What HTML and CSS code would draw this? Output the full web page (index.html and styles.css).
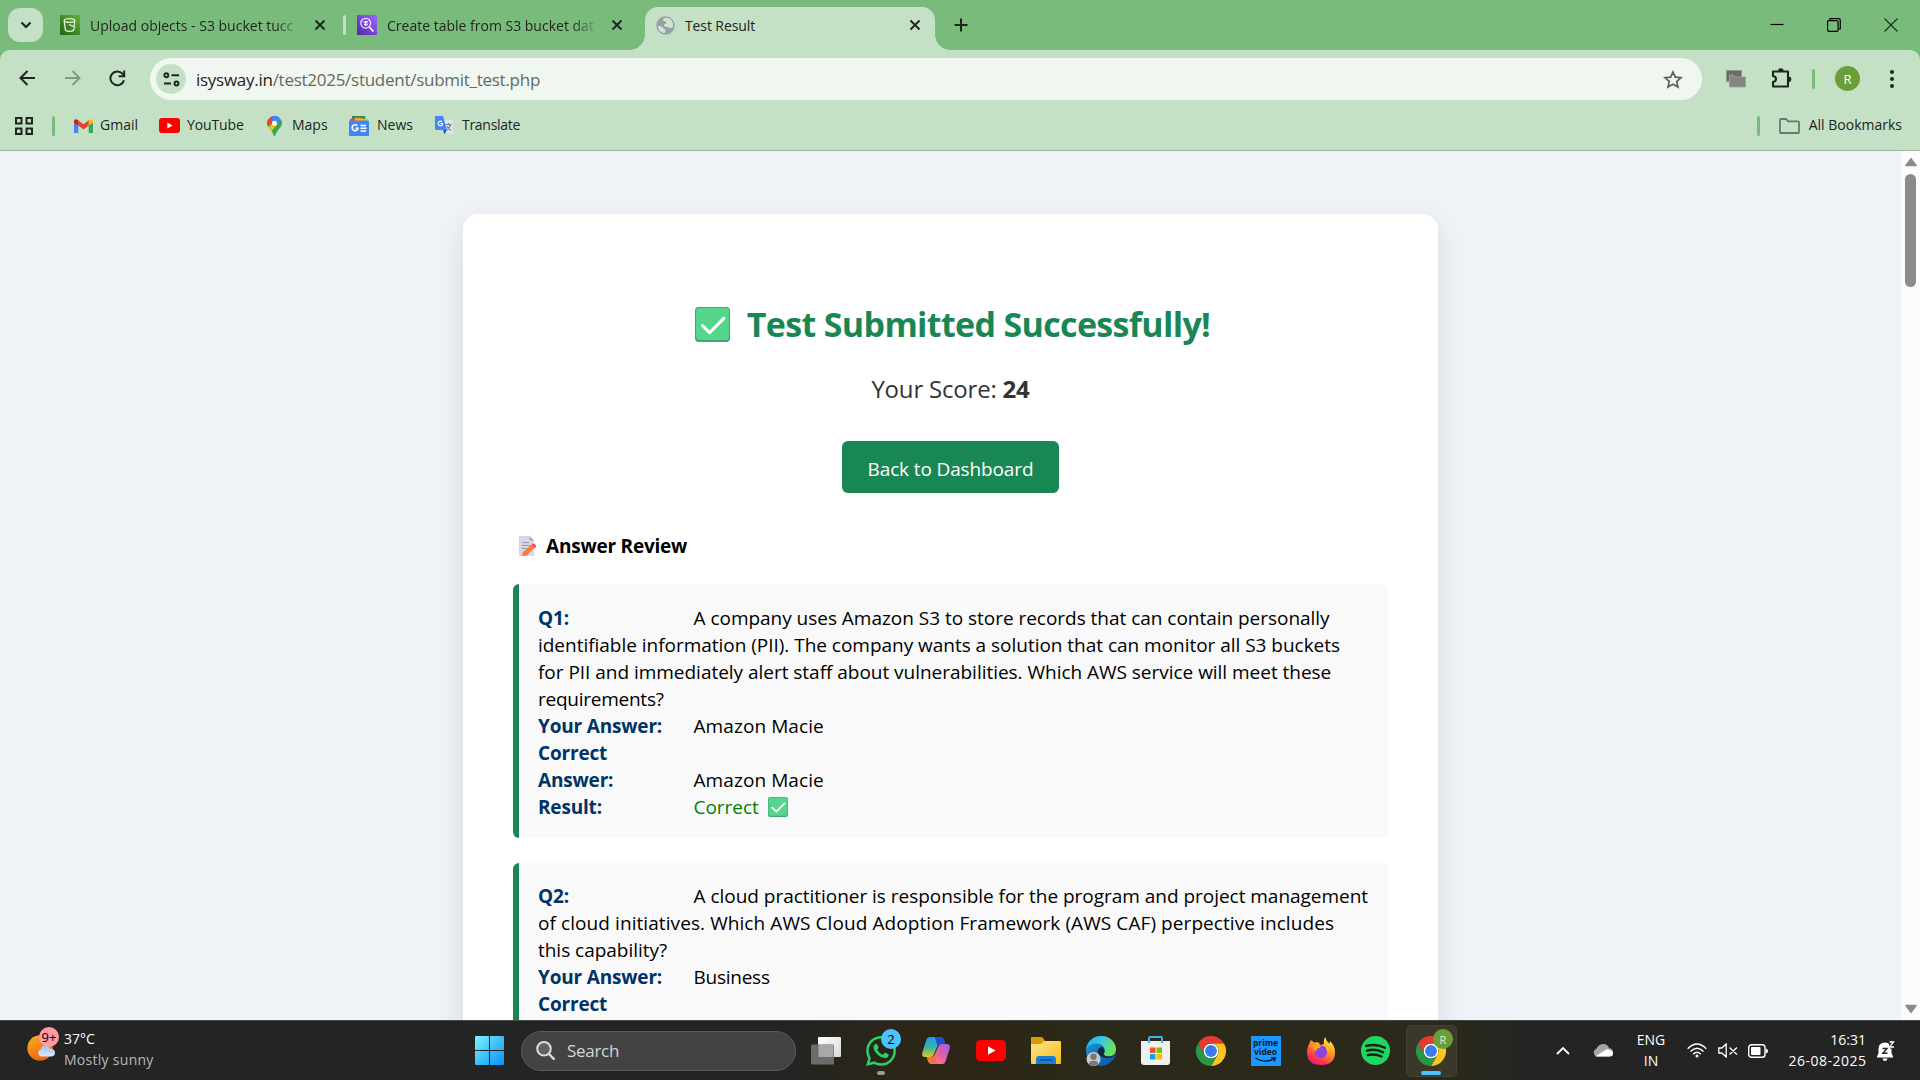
FILE: index.html
```html
<!DOCTYPE html>
<html lang="en">
<head>
<meta charset="utf-8">
<title>Test Result</title>
<link rel="stylesheet" href="styles.css">
</head>
<body>
<svg class="defs" width="0" height="0" aria-hidden="true">
  <defs>
    <linearGradient id="gBucket" x1="0" y1="1" x2="1" y2="0"><stop offset="0" stop-color="#1b660f"/><stop offset="1" stop-color="#6cae3e"/></linearGradient>
    <linearGradient id="gAthena" x1="0" y1="1" x2="1" y2="0"><stop offset="0" stop-color="#4d27a8"/><stop offset="1" stop-color="#a166ff"/></linearGradient>
    <linearGradient id="gWin" x1="0" y1="0" x2="1" y2="1"><stop offset="0" stop-color="#7df5ff"/><stop offset=".5" stop-color="#3fc0fb"/><stop offset="1" stop-color="#0a92fa"/></linearGradient>
    <linearGradient id="gSun" x1="0" y1="0" x2=".4" y2="1"><stop offset="0" stop-color="#f5b325"/><stop offset="1" stop-color="#f0670b"/></linearGradient>
    <linearGradient id="gCloud" x1="0" y1="0" x2="0" y2="1"><stop offset="0" stop-color="#9dbdf0"/><stop offset="1" stop-color="#d9e7fc"/></linearGradient>
    <linearGradient id="gFolder" x1="0" y1="0" x2="1" y2="1"><stop offset="0" stop-color="#ffe28a"/><stop offset="1" stop-color="#f6bd1d"/></linearGradient>
    <linearGradient id="gCopA" x1="0" y1="0" x2="0" y2="1"><stop offset="0" stop-color="#2399f0"/><stop offset=".55" stop-color="#3cb8a0"/><stop offset="1" stop-color="#e9c60c"/></linearGradient>
    <linearGradient id="gCopB" x1="1" y1="0" x2="0" y2="1"><stop offset="0" stop-color="#9b5cf0"/><stop offset=".5" stop-color="#e9609f"/><stop offset="1" stop-color="#ffa05c"/></linearGradient>
    <linearGradient id="gEdgeTop" x1="0" y1="0" x2="1" y2=".4"><stop offset="0" stop-color="#2aa9ea"/><stop offset=".5" stop-color="#36c7e0"/><stop offset="1" stop-color="#6be358"/></linearGradient>
    <linearGradient id="gEdgeLow" x1="0" y1="0" x2="1" y2="1"><stop offset="0" stop-color="#1b9de2"/><stop offset="1" stop-color="#0b4f9e"/></linearGradient>
    <linearGradient id="gFox" x1=".8" y1="0" x2=".2" y2="1"><stop offset="0" stop-color="#fff04a"/><stop offset=".4" stop-color="#ff9a22"/><stop offset=".75" stop-color="#ff3a4a"/><stop offset="1" stop-color="#e3158a"/></linearGradient>
    <linearGradient id="gView" x1="0" y1="0" x2="1" y2="1"><stop offset="0" stop-color="#fff"/><stop offset="1" stop-color="#d8d8d8"/></linearGradient>
    <symbol id="check" viewBox="0 0 34 34">
      <rect width="34" height="34" rx="3.6" fill="#3fa872"/><rect x="1" y="1" width="32" height="31" rx="3" fill="#56d58c"/>
      <path d="M7.2 18l7 7L28 11" fill="none" stroke="#fff" stroke-width="3" stroke-linecap="round" stroke-linejoin="round"/>
    </symbol>
    <symbol id="chrome" viewBox="0 0 48 48">
      <circle cx="24" cy="24" r="12" fill="#fff"/>
      <path fill="#e33b2e" d="M24 12H44.78a23.99 23.99 0 0 0-41.56 0L13.61 30A11.99 11.99 0 0 1 24 12Z"/>
      <path fill="#fcc31e" d="M34.39 30L24 48A23.99 23.99 0 0 0 44.78 12H24A11.99 11.99 0 0 1 34.39 30Z"/>
      <path fill="#269847" d="M13.61 30L3.22 12A23.99 23.99 0 0 0 24 48L34.39 30a11.99 11.99 0 0 1-20.78 0Z"/>
      <circle cx="24" cy="24" r="9.5" fill="#3a7cec"/>
    </symbol>
    <symbol id="close" viewBox="0 0 12 12"><path d="M1.5 1.5l9 9M10.5 1.5l-9 9" stroke="#1f2421" stroke-width="1.9" fill="none"/></symbol>
    <symbol id="tube" viewBox="0 0 30 22"><rect width="30" height="22" rx="4.5" fill="#f00"/><path d="M12 6.5v9l7.5-4.5z" fill="#fff"/></symbol>
  </defs>
</svg>

<div class="screen">
  <header class="browser">
    <div class="tabstrip">
      <div class="tab-search"><svg width="12" height="8" viewBox="0 0 12 8"><path d="M1.5 1.5L6 6l4.5-4.5" fill="none" stroke="#1f2421" stroke-width="2.2"/></svg></div>
      <div class="tab tab-one">
        <svg width="20" height="20" viewBox="0 0 20 20"><rect width="20" height="20" fill="url(#gBucket)"/><g fill="none" stroke="#e6f3dc" stroke-width="1.3"><ellipse cx="9.5" cy="5.5" rx="5.3" ry="1.8"/><path d="M4.2 6l1.2 9.2c1.8 1.5 6.4 1.5 8.2 0L14.800 6M9 9.500l6.500 3"/></g></svg>
        <span class="tab-title">Upload objects - S3 bucket tucc</span>
        <svg width="12" height="12"><use href="#close"/></svg>
      </div>
      <i class="tab-rule"></i>
      <div class="tab">
        <svg width="20" height="20" viewBox="0 0 20 20"><rect width="20" height="20" fill="url(#gAthena)"/><g fill="none" stroke="#f0e6ff" stroke-width="1.3"><circle cx="8.7" cy="8.2" r="4.9"/><path d="M12.3 11.8l4.2 4.8" stroke-width="2"/><path d="M6.5 7h4.4M6.8 9.5h4M8.7 6v5"/></g></svg>
        <span class="tab-title">Create table from S3 bucket dat</span>
        <svg width="12" height="12"><use href="#close"/></svg>
      </div>
      <div class="tab-active">
        <svg width="19" height="19" viewBox="0 0 20 20"><circle cx="10" cy="10" r="9.7" fill="#9aa0a6"/><path d="M2.2 10.5c1.9-.4 4.3.4 5.2 2 .8 1.500 2.400.700 2.600 2.300.1 1.100-1 1.900-.6 3.200-4-.1-7.300-3.300-7.200-7.500zM9.200 2c-1.700.6-2.200 1.900-1.200 2.900 1.200 1 2.900.2 3 1.900-.1 1.700-2.600 1.300-2.700 2.900 0 1.400 1.500 1.500 2.900 1.500 1.700 0 2 1.500 3.600 1.500 1.200 0 2.300-.3 3-1.100.8-3-.4-6.800-3.500-8.600-1.500-.9-3.500-1.300-5.100-1z" fill="#d0e6d2"/></svg>
        <span class="tab-title">Test Result</span>
        <svg width="12" height="12"><use href="#close"/></svg>
      </div>
      <svg class="new-tab" width="14" height="14" viewBox="0 0 14 14"><path d="M7 .5v13M.5 7h13" stroke="#1f2421" stroke-width="2"/></svg>
      <div class="window-controls">
        <svg width="14" height="14" viewBox="0 0 14 14"><path d="M.5 6.500h13" stroke="#000" stroke-width="1.2"/></svg>
        <svg width="14" height="14" viewBox="0 0 14 14" fill="none" stroke="#000" stroke-width="1.2"><rect x=".6" y="2.600" width="10.500" height="10.800" rx="1.300"/><path d="M3 2.500V.6h8.500q1.800 0 1.800 1.800V11h-1.800"/></svg>
        <svg width="14" height="14" viewBox="0 0 14 14"><path d="M.5.5l13 13M13.500.5l-13 13" stroke="#1d2b1e" stroke-width="1.100"/></svg>
      </div>
    </div>

    <div class="toolbar">
      <div class="nav">
        <svg width="17" height="16" viewBox="0 0 17 16"><path d="M16 8H2M8.500 1L1.500 8l7 7" fill="none" stroke="#1f2421" stroke-width="2"/></svg>
        <svg width="17" height="16" viewBox="0 0 17 16"><path d="M1 8h14M8.500 1l7 7-7 7" fill="none" stroke="#7f9a83" stroke-width="2"/></svg>
        <svg width="17" height="17" viewBox="0 0 17 17"><path d="M15 10.200A6.900 6.900 0 1 1 13.500 3.700L15 5.500" fill="none" stroke="#1f2421" stroke-width="2"/><path d="M15.200.5V6.200H9.700" fill="none" stroke="#1f2421" stroke-width="2"/></svg>
      </div>
      <div class="omnibox">
        <span class="site-info"><svg width="17" height="15" viewBox="0 0 17 15" fill="none" stroke="#1f2421" stroke-width="1.900"><circle cx="3.300" cy="3.200" r="2"/><path d="M8.500 3.200H16M1 11.500h7"/><circle cx="13.500" cy="11.500" r="2"/></svg></span>
        <span class="url"><b>isysway.in</b>/test2025/student/submit_test.php</span>
        <svg class="star" width="20" height="19" viewBox="0 0 20 19"><path d="M10 2l2.300 5.200 5.700.5-4.300 3.800 1.300 5.600L10 14.200 5 17.100l1.300-5.600L2 7.700l5.700-.5z" fill="none" stroke="#5a625b" stroke-width="1.700"/></svg>
      </div>
      <div class="actions">
        <svg width="20" height="18" viewBox="0 0 20 18"><rect x=".5" y=".5" width="15" height="11" fill="#6b6b6b" stroke="#909690"/><path d="M3.500 5h4l1.500 2h10.500v10H3.500z" fill="#858585" stroke="#9aa29b"/></svg>
        <svg width="21" height="21" viewBox="0 0 21 21"><path d="M2 3.500H17V18.500H2V14q3-.5 3-3t-3-3Z" fill="none" stroke="#1f2421" stroke-width="2.100" stroke-linejoin="round"/><path d="M7 3a2.800 2.800 0 0 1 5.600 0zM17.500 8.500a2.800 2.800 0 0 1 0 5.600z" fill="#1f2421"/></svg>
        <i class="bar"></i>
        <span class="avatar">R</span>
        <svg width="4" height="18" viewBox="0 0 4 18" fill="#1f2421"><circle cx="2" cy="2" r="2"/><circle cx="2" cy="9" r="2"/><circle cx="2" cy="16" r="2"/></svg>
      </div>
    </div>

    <div class="bookmarks">
      <svg class="apps" width="18" height="18" viewBox="0 0 18 18" fill="none" stroke="#1f2421" stroke-width="2"><path d="M1 1h5.500v5.500H1zM11.500 1H17v5.500h-5.500zM1 11.500h5.500V17H1zM11.500 11.500H17V17h-5.500z"/></svg>
      <i class="bar"></i>
      <div class="mark m-gmail"><svg width="19" height="14" viewBox="0 0 19 14"><path d="M0 2v12h4.300V5z" fill="#4285f4"/><path d="M19 2v12h-4.300V5z" fill="#34a853"/><path d="M14.700 6.500V1.200C16.500-.5 19 .3 19 2.300V4z" fill="#fbbc04"/><path d="M4.300 6.500V1.200C2.500-.5 0 .3 0 2.300V4z" fill="#c5221f"/><path d="M4.300 1.200l5.200 4 5.200-4v5.300l-5.200 4-5.200-4z" fill="#ea4335"/></svg><span>Gmail</span></div>
      <div class="mark m-tube"><svg width="21" height="15" viewBox="0 0 30 22" preserveAspectRatio="none"><use href="#tube" width="30" height="22"/></svg><span>YouTube</span></div>
      <div class="mark m-maps"><svg width="15" height="20" viewBox="0 0 15 20"><clipPath id="pin"><path d="M7.500 0A7.300 7.300 0 0 1 14.800 7.300C14.800 12 9.500 13.500 8.200 19.500q-.7 1-1.400 0C5.500 13.500.2 12 .2 7.300A7.300 7.300 0 0 1 7.500 0Z"/></clipPath><g clip-path="url(#pin)"><path d="M0 0h15v20H0z" fill="#34a853"/><path d="M0 11.500L10 0H0z" fill="#ea4335"/><path d="M4 0h11v3L8 9z" fill="#4285f4"/><path d="M0 0l5 5-5 6z" fill="#ea4335"/><path d="M0 12L14 1l1 3L3 17z" fill="#fbbc04"/><path d="M5 4.800L9 0h6v3.500L10 9z" fill="#4285f4"/><path d="M15 3L3 17l5 3 7-5z" fill="#34a853"/></g><circle cx="7.500" cy="7.200" r="2.500" fill="#fff"/></svg><span>Maps</span></div>
      <div class="mark m-news"><svg width="20" height="20" viewBox="0 0 20 20"><path d="M3 0h13l1 6H3z" fill="#0c9d58"/><path d="M1 3l11-3 3 6H1z" fill="#ea4335"/><path d="M6 2l13 1-1 5H5z" fill="#fbbc04"/><rect y="4.500" width="20" height="15.500" rx="1" fill="#4285f4"/><path d="M8.300 9.600a3 3 0 1 0 .8 2.600H6.500M11.500 9.500H17M11.500 12.200h6M11.500 15H17" stroke="#fff" stroke-width="1.600" fill="none"/></svg><span>News</span></div>
      <div class="mark m-trans"><svg width="18" height="19" viewBox="0 0 18 19"><path d="M7 4h10q1 0 1 1v12q0 1-1 1h-7z" fill="#dfe3e8"/><path d="M10.500 8.500h6M13.500 7v1.500M15.500 8.500q-1 4-4 5.500M12 10.500q1.500 2.500 4 4" stroke="#6b7f96" stroke-width="1.200" fill="none"/><path d="M1 0h7l4 14H1q-1 0-1-1V1q0-1 1-1z" fill="#4285f4"/><path d="M8 14h4l-2.500 4.500z" fill="#2a56c6"/><path d="M7 5.700A2.300 2.300 0 1 0 7.700 7.500H5.500" stroke="#fff" stroke-width="1.200" fill="none"/></svg><span>Translate</span></div>
      <div class="all-marks"><i class="bar"></i><svg width="21" height="16" viewBox="0 0 21 16"><path d="M1 2q0-1 1-1h5l2.200 2.300H19q1 0 1 1V14q0 1-1 1H2q-1 0-1-1z" fill="none" stroke="#6d756e" stroke-width="1.800"/></svg><span>All Bookmarks</span></div>
    </div>
  </header>

  <div class="viewport">
    <main class="page">
      <section class="result">
        <h1><svg width="35" height="35"><use href="#check"/></svg><span>Test Submitted Successfully!</span></h1>
        <p class="score">Your Score: <strong>24</strong></p>
        <div class="cta"><a class="button">Back to Dashboard</a></div>
        <h2><svg width="18" height="20" viewBox="0 0 18 20"><path d="M0 0h10.500L15 4.500V20H0z" fill="#dcd4e4"/><path d="M10.500 0L15 4.500h-4.500z" fill="#aaa0b4"/><path d="M3 6.500h7M3 9.500h8M3 12.500h6" stroke="#9d94a8" stroke-width="1"/><path d="M3 20l1.200-3.800L12.500 8.500l3.200 3.200-8.300 8z" fill="#fb7a3c"/><path d="M12.500 8.500l1.300-1q1.200-.5 2.500 1t.8 2.500l-1.400.9z" fill="#f0504e"/></svg><span>Answer Review</span></h2>

        <article class="question first">
          <div class="line"><b class="label">Q1:</b><span>A company uses Amazon S3 to store records that can contain personally</span></div>
          <div class="line"><span>identifiable information (PII). The company wants a solution that can monitor all S3 buckets</span></div>
          <div class="line"><span>for PII and immediately alert staff about vulnerabilities. Which AWS service will meet these</span></div>
          <div class="line"><span class="snug">requirements?</span></div>
          <div class="line"><b class="label">Your Answer:</b><span class="loose">Amazon Macie</span></div>
          <div class="line"><b class="label">Correct</b></div>
          <div class="line"><b class="label">Answer:</b><span class="loose">Amazon Macie</span></div>
          <div class="line"><b class="label">Result:</b><span class="ok">Correct</span><svg class="tick" width="20" height="20"><use href="#check"/></svg></div>
        </article>

        <article class="question">
          <div class="line"><b class="label">Q2:</b><span>A cloud practitioner is responsible for the program and project management</span></div>
          <div class="line"><span class="loose">of cloud initiatives. Which AWS Cloud Adoption Framework (AWS CAF) perpective includes</span></div>
          <div class="line"><span>this capability?</span></div>
          <div class="line"><b class="label">Your Answer:</b><span class="snug">Business</span></div>
          <div class="line"><b class="label">Correct</b></div>
        </article>
      </section>
    </main>
    <div class="scrollbar">
      <svg width="12" height="10" viewBox="0 0 12 10"><path d="M6 .5L11.800 8.200q.2 1-.8 1H1q-1 0-.8-1z" fill="#8b8b8b"/></svg>
      <i class="thumb"></i>
      <svg class="down" width="12" height="10" viewBox="0 0 12 10"><path d="M6 9.500L11.800 1.800q.2-1-.8-1H1q-1 0-.8 1z" fill="#8b8b8b"/></svg>
    </div>
  </div>

  <footer class="taskbar">
    <div class="weather">
      <div class="sun">
        <svg width="32" height="36" viewBox="0 0 32 36"><circle cx="13" cy="21" r="12.700" fill="url(#gSun)"/><path d="M14 29.500a3.800 3.800 0 0 1 0-7.300q.5-4 4.500-4 3.500 0 4.500 3.300 5 .3 5 4.200 0 3.800-4 3.800z" fill="url(#gCloud)"/></svg>
        <span class="badge pink">9+</span>
      </div>
      <div class="forecast"><span>37°C</span><span class="sky">Mostly sunny</span></div>
    </div>
    <div class="apps-row">
      <div class="cell start"><svg width="29" height="29" viewBox="0 0 29 29"><path d="M1 0h13v14H0V1q0-1 1-1zM15 0h13q1 0 1 1v13H15zM0 15h14v14H1q-1 0-1-1zM15 15h14v13q0 1-1 1H15z" fill="url(#gWin)"/></svg></div>
      <div class="search"><svg width="19" height="19" viewBox="0 0 19 19"><circle cx="8" cy="7.800" r="6.800" fill="#626262" stroke="#dcdcdc" stroke-width="2"/><path d="M12.800 12.800l5 5" stroke="#dcdcdc" stroke-width="2.400" stroke-linecap="round"/></svg><span>Search</span></div>
      <div class="cell"><svg width="30" height="28" viewBox="0 0 30 28"><rect x="7" width="23" height="20" rx="1" fill="url(#gView)"/><rect y="7.500" width="23" height="20" rx="1" fill="#6b6b6b"/><path d="M7.500 8H22.500V20h-15z" fill="#a8a8a8"/></svg></div>
      <div class="cell"><svg width="30" height="30" viewBox="0 0 24 24"><path fill="#25d366" d="M17.472 14.382c-.297-.149-1.758-.867-2.030-.967-.273-.099-.471-.148-.670.150-.197.297-.767.966-.940 1.164-.173.199-.347.223-.644.075-.297-.150-1.255-.463-2.390-1.475-.883-.788-1.480-1.761-1.653-2.059-.173-.297-.018-.458.130-.606.134-.133.298-.347.446-.520.149-.174.198-.298.298-.497.099-.198.050-.371-.025-.520-.075-.149-.669-1.612-.916-2.207-.242-.579-.487-.500-.669-.510-.173-.008-.371-.010-.570-.010-.198 0-.520.074-.792.372-.272.297-1.040 1.016-1.040 2.479 0 1.462 1.065 2.875 1.213 3.074.149.198 2.096 3.200 5.077 4.487.709.306 1.262.489 1.694.625.712.227 1.360.195 1.871.118.571-.085 1.758-.719 2.006-1.413.248-.694.248-1.289.173-1.413-.074-.124-.272-.198-.570-.347m-5.421 7.403h-.004a9.870 9.870 0 0 1-5.031-1.378l-.361-.214-3.741.982.998-3.648-.235-.374a9.860 9.860 0 0 1-1.510-5.260c.001-5.450 4.436-9.884 9.888-9.884 2.640 0 5.122 1.030 6.988 2.898a9.825 9.825 0 0 1 2.893 6.994c-.003 5.450-4.437 9.884-9.885 9.884m8.413-18.297A11.815 11.815 0 0 0 12.050 0C5.495 0 .160 5.335.157 11.892c0 2.096.547 4.142 1.588 5.945L.057 24l6.305-1.654a11.882 11.882 0 0 0 5.683 1.448h.005c6.554 0 11.890-5.335 11.893-11.893a11.821 11.821 0 0 0-3.480-8.413z"/></svg><span class="badge blue">2</span><i class="dot"></i></div>
      <div class="cell"><svg width="28" height="27" viewBox="0 0 28 27"><path d="M8 0h10q3 0 4 3l1 4h-4q-3 0-4 3l-3 7q-1 3-4 3H3q-4 0-2.500-5L4 4Q5 0 8 0z" fill="url(#gCopA)"/><path d="M12 0h6q3 0 4 3l1 4h-4q-2.500 0-3.500 2L14 4q-.5-3-2-4z" fill="#1f4fd0"/><path d="M20 27H10q-3 0-4-3l-1-4h4q3 0 4-3l3-7q1-3 4-3h5q4 0 2.500 5L24 23q-1 4-4 4z" fill="url(#gCopB)"/><path d="M16 27h-6q-3 0-4-3l-1-4h4q2.500 0 3.500-2L14 23q.5 3 2 4z" fill="#f0714e"/></svg></div>
      <div class="cell"><svg width="30" height="21" viewBox="0 0 30 22" preserveAspectRatio="none"><use href="#tube" width="30" height="22"/></svg></div>
      <div class="cell"><svg width="30" height="27" viewBox="0 0 30 27"><path d="M0 1q0-1 1-1h9q1 0 2 1l2 3-3 4H0z" fill="#d99a08"/><path d="M0 7h9q1.500 0 2.500-1.500T14 4h15q1 0 1 1v21q0 1-1 1H1q-1 0-1-1z" fill="url(#gFolder)"/><path d="M5 27v-4.500Q5 19 8 19h14q3 0 3 3.500V27z" fill="#1a7fd4"/><path d="M8.500 23h13" stroke="#0b5299" stroke-width="1.400"/></svg></div>
      <div class="cell"><svg width="30" height="30" viewBox="0 0 30 30"><circle cx="15" cy="15" r="15" fill="url(#gEdgeLow)"/><path d="M0 14C1 5 7.500 0 15 0c9 0 15 6.500 15 13 0 5-4 7.500-8 7.500-3.500 0-5-1.300-4-2.700C20 14 18 7.500 10.500 7.500 5 7.500 1.500 10.500 0 14z" fill="url(#gEdgeTop)"/><path d="M11.500 15.500q1-4.500 4.500-4.500 3 1.500 2.500 4.500-.5 1.500-1 2.700 1.500 2.300 5.500 2.300 3.500-.3 5.500-1.500Q27 22 22 22 12.500 22 11.500 15.500z" fill="#15283a"/><circle cx="7.500" cy="23" r="7" fill="#c9c9c9"/><circle cx="7.500" cy="20.800" r="3.200" fill="#7c7672"/><path d="M3 28q0-3.200 4.500-3.200T12 28q-4.500 3.500-9 0z" fill="#7c7672"/></svg></div>
      <div class="cell"><svg width="29" height="29" viewBox="0 0 29 29"><path d="M8 7V2q0-1 1-1h11q1 0 1 1v5" fill="none" stroke="#35b6ea" stroke-width="2"/><path d="M0 5h29v21q0 3-3 3H3q-3 0-3-3z" fill="#f0f0f0"/><path d="M8 4v3M21 4v3" stroke="#35b6ea" stroke-width="2"/><path d="M9 11.500h5.500V17H9z" fill="#f35325"/><path d="M15.500 11.500H21V17h-5.500z" fill="#81bc06"/><path d="M9 18h5.500v5.500H9z" fill="#05a6f0"/><path d="M15.500 18H21v5.500h-5.500z" fill="#ffba08"/></svg></div>
      <div class="cell"><svg width="30" height="30"><use href="#chrome"/></svg></div>
      <div class="cell"><span class="prime"><span>prime</span><span>video</span><svg width="22" height="6" viewBox="0 0 22 6"><path d="M.5 1Q10 7 19.500 1.500M16 .8h4.500L19 4.500" fill="none" stroke="#06182c" stroke-width="1.300"/></svg></span></div>
      <div class="cell"><svg width="28" height="28" viewBox="0 0 28 28"><path d="M2.500 6L4 3l3 2.500 3.500-.5Q13 6 13 8l4-1q-1-4 1.500-7 .5 4 4 6.500L23 4q5 5 5 11 0 13-14 13Q0 28 0 15q0-5 2.500-9z" fill="url(#gFox)"/><circle cx="13.800" cy="14.800" r="6.300" fill="#8a42e0"/><path d="M4 9q4-3 8-1l2 1.500q-1 2-4 2.300-1 1.200-.5 3Q7 14 6 11z" fill="#ffa42b"/><path d="M17 7.500q5 1.500 5 7.500l-2-1q0-4-3-6.500z" fill="#ffbf2e"/></svg></div>
      <div class="cell"><svg width="29" height="29" viewBox="0 0 24 24"><circle cx="12" cy="12" r="12" fill="#1ed760"/><path d="M4.300 8.300Q12.500 6 19.800 9.700M5 12.200Q12 10.200 18.300 13.500M5.600 15.800Q11.800 14.300 17 17" fill="none" stroke="#16210f" stroke-linecap="round" stroke-width="2"/></svg></div>
      <div class="cell current"><svg width="30" height="30"><use href="#chrome"/></svg><span class="badge user">R</span><i class="dot active"></i></div>
    </div>
    <div class="tray">
      <svg class="i-up" width="14" height="8" viewBox="0 0 14 8"><path d="M1 7l6-6 6 6" fill="none" stroke="#fff" stroke-width="1.800"/></svg>
      <svg width="20" height="13" viewBox="0 0 20 13"><path d="M4 12.500a4 4 0 0 1-.5-7.700Q5.500 0 10.500 0q4 0 5.500 4 4 .5 4 4.500 0 4-3.500 4z" fill="#a6a6a6"/><path d="M2.500 12.200L12.500 6q1.500-1.300 3.500-.3 4 .8 4 3.500 0 3.300-3.500 3.300H4z" fill="#fff"/></svg>
      <div class="lang"><span>ENG</span><span>IN</span></div>
      <svg class="i-wifi" width="20" height="15" viewBox="0 0 20 15" fill="none" stroke="#fff" stroke-width="1.400"><path d="M.7 5.800Q10-3.800 19.300 5.800M3.500 8.600Q10 2 16.500 8.600M6.200 11.200Q10 7.200 13.800 11.200"/><circle cx="10" cy="13" r="1.500" fill="#fff" stroke="none"/></svg>
      <svg class="i-mute" width="20" height="15" viewBox="0 0 20 15" fill="none" stroke="#fff" stroke-width="1.300"><path d="M.8 5v5h3L8.200 14V1L3.800 5zM11.500 4.500l7.500 7M19 4.500l-7.500 7"/></svg>
      <svg width="20" height="14" viewBox="0 0 20 14"><rect x=".7" y=".7" width="16.300" height="12.600" rx="2.800" fill="none" stroke="#fff" stroke-width="1.400"/><rect x="3" y="3" width="9.500" height="8" rx="1" fill="#fff"/><path d="M18 4.500q2 .5 2 2.500t-2 2.500z" fill="#fff"/></svg>
      <div class="clock"><span>16:31</span><span class="date">26-08-2025</span></div>
      <svg width="18" height="20" viewBox="0 0 18 20"><path d="M8 1.500q6.500 0 6.500 6.500v4l1.500 3.500v1H0v-1L1.500 12V8Q1.500 1.500 8 1.500zM5.500 17.500h5q-.5 2.500-2.500 2.500t-2.500-2.500z" fill="#fff"/><path d="M11 0h7v7.500h-5z" fill="#242424"/><path d="M12.500 1h4l-4 5h4.500" fill="none" stroke="#fff" stroke-width="1.300"/><path d="M5.500 7.500H10L5.800 12.300H10.500" fill="none" stroke="#242424" stroke-width="1.400"/></svg>
    </div>
  </footer>
</div>
</body>
</html>
```
FILE: styles.css
```css
* { box-sizing: border-box; }
html, body { margin: 0; height: 100%; overflow: hidden; }
body { font-family: "Open Sans", "Noto Sans", sans-serif; color: #000; background: #eff3f8; }
svg { display: block; flex: none; }
.defs { position: absolute; }
.screen { display: flex; flex-direction: column; width: 1920px; height: 1080px; overflow: hidden; white-space: nowrap; }

/* Browser chrome */
.browser { flex: none; height: 151px; background: #79bb7b; border-bottom: 1px solid #9db89e; }
.tabstrip { display: flex; height: 50px; align-items: center; padding-left: 8px; font-size: 14px; color: #1f2421; }
.tab-search { display: flex; align-items: center; justify-content: center; width: 35px; height: 34px; border-radius: 12px; background: #c4e1c5; }
.tab { display: flex; align-items: center; }
.tab-title { line-height: 20px; padding-top: 1px; }
.tab .tab-title { flex: none; width: 210px; margin: 0 14px 0 10px; overflow: hidden; -webkit-mask-image: linear-gradient(90deg, #000 185px, transparent 212px); mask-image: linear-gradient(90deg, #000 185px, transparent 212px); }
.tab-one { margin-left: 17px; }
.tab-rule { width: 3px; height: 20px; margin: 0 11px 0 17px; border-radius: 2px; background: #c4e1c5; }
.tab-active { position: relative; display: flex; align-items: center; align-self: flex-end; width: 290px; height: 43px; margin-left: 22px; padding: 0 14px 7px 11px; border-radius: 13px 13px 0 0; background: #c4e1c5; }
.tab-active::before, .tab-active::after { content: ""; position: absolute; bottom: 0; width: 15px; height: 15px; }
.tab-active::before { left: -15px; background: radial-gradient(circle at 0 0, transparent 14.5px, #c4e1c5 15px); }
.tab-active::after { right: -15px; background: radial-gradient(circle at 100% 0, transparent 14.5px, #c4e1c5 15px); }
.tab-active .tab-title { flex: 1; margin-left: 10px; letter-spacing: -.1px; }
.new-tab { margin-left: 19px; }
.window-controls { display: flex; gap: 43px; margin-left: auto; padding-right: 22px; }

.toolbar { display: flex; height: 51px; align-items: center; border-radius: 10px 10px 0 0; background: #c4e1c5; padding: 7px 0 0 19px; }
.nav { display: flex; gap: 28px; width: 131px; padding-bottom: 2px; }
.omnibox { display: flex; align-items: center; width: 1552px; height: 42px; border-radius: 21px; background: #f0f7f0; padding: 0 19px 0 6px; }
.site-info { display: flex; align-items: center; justify-content: center; width: 30px; height: 30px; border-radius: 50%; background: #c4e1c5; }
.url { flex: 1; margin-left: 10px; font-size: 17px; letter-spacing: -.27px; color: #5f6b62; }
.url b { font-weight: 400; color: #1f2421; }
.actions { display: flex; align-items: center; margin-left: 24px; padding-bottom: 1px; }
.bar { display: block; width: 3px; height: 20px; border-radius: 2px; background: #79bb7b; }
.actions svg:nth-child(2) { margin-left: 25px; }
.actions .bar { margin-left: 20px; }
.avatar { display: flex; align-items: center; justify-content: center; width: 25px; height: 25px; margin: 0 30px 0 20px; border-radius: 50%; background: #689f38; color: #fff; font-size: 13px; }

.bookmarks { display: flex; height: 49px; align-items: center; padding: 0 18px 0 15px; background: #c4e1c5; font-size: 14px; color: #1f2421; }
.bookmarks > .bar { margin-left: 19px; }
.mark, .all-marks { display: flex; align-items: center; }
.mark span, .all-marks span { padding-bottom: 2px; }
.m-gmail { width: 85px; margin-left: 19px; gap: 7px; }
.m-tube { width: 108px; gap: 7px; letter-spacing: -.12px; }
.m-maps { width: 82px; gap: 10px; }
.m-news { width: 86px; gap: 8px; }
.m-trans { gap: 9px; letter-spacing: -.28px; }
.all-marks { margin-left: auto; }
.all-marks svg { margin: 0 9px 0 19px; }

/* Result page */
.viewport { display: flex; flex: 1; min-height: 0; background: #eff3f8; }
.page { flex: 1; overflow: hidden; padding: 63px 463px 0; }
.scrollbar { display: flex; flex-direction: column; align-items: center; width: 19px; padding: 6px 0; background: #fcfcfc; }
.thumb { width: 11px; height: 113px; margin-top: 7px; border-radius: 6px; background: #8b8b8b; }
.scrollbar .down { margin-top: auto; }
.result { width: 975px; height: 900px; padding: 89px 50px 0; border-radius: 15px; background: #fff; box-shadow: 0 10px 31px rgba(0, 0, 0, .1); }
h1, h2, p { margin: 0; }
h1 { display: flex; align-items: center; justify-content: center; height: 42px; gap: 17px; padding-left: 4px; font-size: 34px; letter-spacing: -.66px; color: #198754; }
.score { height: 34px; margin-top: 27px; line-height: 34px; font-size: 24px; letter-spacing: -.2px; text-align: center; color: #333; }
.cta { display: flex; justify-content: center; margin-top: 35px; }
.button { display: flex; align-items: center; justify-content: center; width: 217px; height: 52px; padding-top: 3px; border-radius: 6px; background: #198754; color: #fff; font-size: 19px; letter-spacing: -.13px; }
h2 { display: flex; align-items: center; height: 27px; gap: 9px; margin: 39px 0 25px; padding-left: 6px; font-size: 19px; letter-spacing: -.22px; }
.question { margin-bottom: 25px; padding: 20px 19px 18px; border-left: 6px solid #198754; border-radius: 6px; background: #f9f9f9; font-size: 19px; letter-spacing: -.025px; }
.question.first { padding: 21px 19px 17px; }
.line { display: flex; height: 27px; line-height: 27px; }
.label { width: 155.5px; color: #003366; letter-spacing: -.18px; }
.snug { letter-spacing: -.25px; }
.loose { letter-spacing: .08px; }
.ok { color: #008000; }
.tick { margin: 3px 0 0 9px; }

/* Taskbar */
.taskbar { display: flex; flex: none; height: 60px; border-top: 1px solid #454545; background: linear-gradient(90deg, #242424 780px, #2b2617 900px, #2d2516 960px, #2b2919 1080px, #2b2919 1440px, #242424 1530px); color: #fff; }
.weather { display: flex; width: 462px; padding-left: 27px; }
.sun { position: relative; padding-top: 6px; }
.badge { position: absolute; display: flex; align-items: center; justify-content: center; width: 20px; height: 20px; border-radius: 50%; font-size: 13px; color: #000; }
.pink { left: 12px; top: 6px; background: #ff99a4; }
.forecast { display: flex; flex-direction: column; margin-left: 5px; padding-top: 8px; font-size: 14px; line-height: 20.5px; }
.sky { color: #b9b9b9; letter-spacing: .28px; }
.apps-row { display: flex; align-items: center; }
.cell { position: relative; display: flex; align-items: center; justify-content: center; width: 55px; height: 59px; }
.start { margin-right: 4px; }
.search { display: flex; align-items: center; gap: 12px; width: 275px; height: 40px; margin-right: 2px; padding-left: 14px; border: 1px solid #5b5b5b; border-radius: 20px; background: #434343; color: #d6d6d6; font-size: 17px; letter-spacing: -.3px; }
.blue { right: 7px; top: 8px; background: #4cc2ff; }
.user { right: 5px; top: 8px; background: #689f38; color: #e0ecd2; font-size: 11px; }
.dot { position: absolute; bottom: 5px; width: 8px; height: 4px; border-radius: 2px; background: #9a9a9a; }
.active { width: 20px; background: #4cc2ff; }
.current::before { content: ""; position: absolute; left: 3px; top: 4px; width: 49px; height: 50px; border: 1px solid #454334; border-radius: 5px; background: #3a3829; }
.current svg { position: relative; }
.prime { display: flex; flex-direction: column; align-items: center; width: 30px; height: 30px; padding-top: 2px; background: #1a98ff; color: #06182c; font-size: 8.5px; font-weight: 700; line-height: 9.5px; }
.tray { display: flex; align-items: center; margin-left: auto; padding-right: 25px; font-size: 14px; }
.lang, .clock { display: flex; flex-direction: column; line-height: 20.5px; }
.lang { align-items: center; width: 42px; margin: 0 15px 0 17px; }
.clock { align-items: flex-end; width: 80px; margin: 0 11px 0 18px; }
.date { letter-spacing: .48px; margin-right: -.48px; }
.i-up { margin-right: 23px; }
.i-wifi { margin-right: 11px; }
.i-mute { margin-right: 10px; }
```
